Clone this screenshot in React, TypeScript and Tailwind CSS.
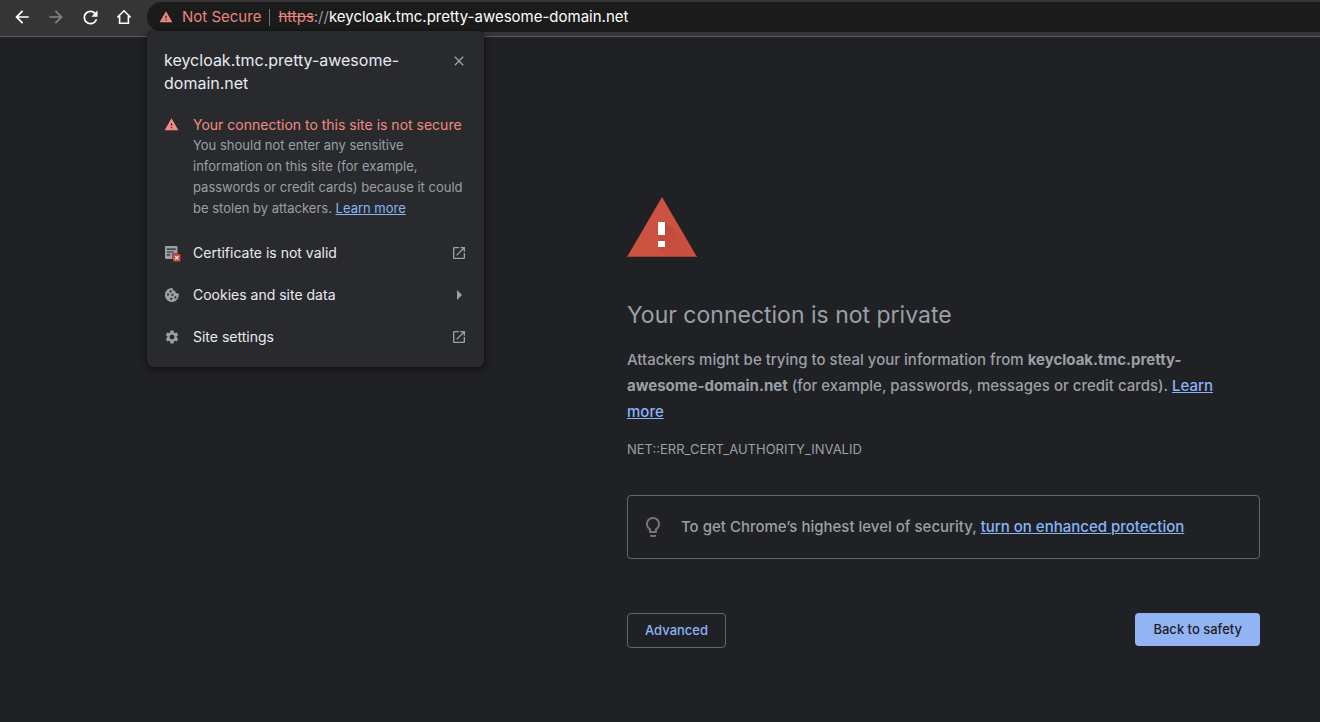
import type { ReactNode } from "react";
import {
  MdArrowBack,
  MdArrowForward,
  MdArrowRight,
  MdClose,
  MdLightbulbOutline,
  MdOpenInNew,
  MdRefresh,
  MdSettings,
  MdWarning,
} from "react-icons/md";

const HOST = "keycloak.tmc.pretty-awesome-domain.net";

function HomeIcon() {
  return (
    <svg width="16" height="16" viewBox="0 0 16 16" fill="none" stroke="currentColor" strokeWidth="1.6" aria-hidden="true">
      <path d="M1.4 8.4 8 1.8l6.600 6.600M3.600 7v7.200h8.800V7" />
    </svg>
  );
}

function CertificateIcon() {
  return (
    <svg width="17" height="17" viewBox="0 0 17 17" aria-hidden="true">
      <path fill="#9aa0a6" d="M2 1h10.500a1 1 0 0 1 1 1v6.500H8.500V14H2a1 1 0 0 1-1-1V2a1 1 0 0 1 1-1Z" />
      <path stroke="#292a2d" strokeWidth="1.200" d="M2.800 4.200h9M2.800 7h7M2.800 9.800h3.400" />
      <rect x="9" y="9" width="7.500" height="7.500" rx="1" fill="#d04a3c" />
      <path stroke="#fff" strokeWidth="1.200" d="m11.200 11.200 3.200 3.200m0-3.200-3.200 3.200" />
    </svg>
  );
}

function CookieIcon() {
  return (
    <svg width="16" height="16" viewBox="0 0 16 16" aria-hidden="true">
      <path fill="#9aa0a6" d="M8.600 1a2.600 2.600 0 0 0 2.600 3 2.400 2.400 0 0 0 2.200 2.600c.5 0 .9 0 1.300-.2A7 7 0 1 1 8.600 1Z" />
      <g fill="#292a2d">
        <circle cx="6.600" cy="4.400" r="1.100" />
        <circle cx="4" cy="7.600" r="1.100" />
        <circle cx="8.400" cy="7.800" r="1.100" />
        <circle cx="7.200" cy="11.800" r="1.100" />
        <circle cx="11.400" cy="10.400" r="1.100" />
      </g>
    </svg>
  );
}

function WarningTriangle() {
  return (
    <svg width="70" height="60" viewBox="0 0 70 60" aria-hidden="true">
      <defs>
        <linearGradient id="shade" x1="0" y1="0" x2="1" y2="1">
          <stop offset="0" stopColor="#9c3b30" stopOpacity="0.6" />
          <stop offset="0.5" stopColor="#b5453a" stopOpacity="0.2" />
          <stop offset="1" stopColor="#b5453a" stopOpacity="0" />
        </linearGradient>
      </defs>
      <path fill="#cb5140" d="M35 0 70 60H0Z" />
      <path fill="url(#shade)" d="M38 25 60 43 70 60H42L31 50 35 50 31 38Z" />
      <path fill="#a9402f" d="M.6 59h68.800l.6 1H0Z" />
      <path fill="#fff" d="M31 25h7v13h-7zM31 44h7v6h-7z" />
    </svg>
  );
}

function PopupRow({ icon, label, trailing }: { icon: ReactNode; label: string; trailing: ReactNode }) {
  return (
    <li>
      <button type="button" className="flex h-[42px] w-full items-center px-[17px] text-left text-sm text-[#e8eaed]">
        <span className="flex w-[29px] shrink-0 items-center">{icon}</span>
        <span className="flex-1">{label}</span>
        <span className="flex w-4 justify-center text-[#9aa0a6]">{trailing}</span>
      </button>
    </li>
  );
}

function SiteInfoPopup() {
  return (
    <section
      aria-label="Site information"
      className="absolute top-[31px] left-[147px] z-10 w-[337px] rounded-md bg-[#292a2d] pb-[9px] shadow-[0_2px_8px_rgba(0,0,0,0.5),0_0_1px_#000]"
    >
      <header className="flex items-start justify-between px-[17px] pt-[18px]">
        <h2 className="w-60 text-base leading-[23px] text-[#e8eaed]">{HOST}</h2>
        <button type="button" aria-label="Close" className="mt-1 text-[#9aa0a6]">
          <MdClose size={16} />
        </button>
      </header>
      <div className="flex px-[17px] pt-[19px] pb-[13px]">
        <span className="w-[29px] shrink-0 pt-[3px] text-[#f28b82]">
          <MdWarning size={15} />
        </span>
        <div className="flex-1">
          <h3 className="text-sm leading-[21px] whitespace-nowrap text-[#f28b82]">Your connection to this site is not secure</h3>
          <p className="text-[13px] leading-[21px] text-[#9aa0a6]">
            You should not enter any sensitive information on this site (for example, passwords or credit cards) because it could be
            stolen by attackers.{" "}
            <a href="#learn-more" className="text-[#8ab4f8] underline">
              Learn more
            </a>
          </p>
        </div>
      </div>
      <ul>
        <PopupRow icon={<CertificateIcon />} label="Certificate is not valid" trailing={<MdOpenInNew size={16} />} />
        <PopupRow icon={<CookieIcon />} label="Cookies and site data" trailing={<MdArrowRight size={24} className="shrink-0" />} />
        <PopupRow icon={<MdSettings size={16} className="text-[#9aa0a6]" />} label="Site settings" trailing={<MdOpenInNew size={16} />} />
      </ul>
    </section>
  );
}

function Toolbar() {
  return (
    <header className="flex h-[37px] items-start border-b border-[#5c5c5c] bg-[#353535] pt-0.5 text-white">
      <nav aria-label="Browser controls" className="flex h-[30px] w-[147px] shrink-0 items-center gap-3.5 pl-3">
        <button type="button" aria-label="Back" className="flex w-5 justify-center"><MdArrowBack size={20} /></button>
        <button type="button" aria-label="Forward" className="flex w-5 justify-center text-[#858585]"><MdArrowForward size={20} /></button>
        <button type="button" aria-label="Reload" className="flex w-5 justify-center"><MdRefresh size={21} className="shrink-0" /></button>
        <button type="button" aria-label="Home" className="flex w-5 justify-center"><HomeIcon /></button>
      </nav>
      <div className="flex h-[30px] flex-1 items-center rounded-l-full bg-[#1b1b1b] pl-3 text-[15px] whitespace-nowrap">
        <button type="button" className="flex items-center gap-[9px] text-[#e8877e]">
          <MdWarning size={14} />
          Not Secure
        </button>
        <span className="mx-2 h-[17px] w-px bg-[#757575]" />
        <span>
          <span className="text-[#e8877e] line-through">https</span>
          <span className="text-[#9a9a9a]">://</span>
          {HOST}
        </span>
      </div>
    </header>
  );
}

export default function App() {
  return (
    <div className="relative min-h-screen bg-[#202124] font-['Inter',sans-serif]">
      <Toolbar />
      <SiteInfoPopup />
      <main className="mr-[60px] ml-auto max-w-[633px] pt-40 pb-[74px] text-[#9aa0a6]">
        <WarningTriangle />
        <h1 className="mt-[42px] text-[23px] leading-8">Your connection is not private</h1>
        <p className="mt-4 pr-6 text-[15px] leading-[26px] font-medium">
          Attackers might be trying to steal your information from <strong className="font-bold">{HOST}</strong> (for example,
          passwords, messages or credit cards).{" "}
          <a href="#learn-more" className="text-[#8ab4f8] underline">
            Learn more
          </a>
        </p>
        <p className="mt-3.5 text-[13px] leading-5">NET::ERR_CERT_AUTHORITY_INVALID</p>
        <div className="mt-9 flex h-16 items-center gap-4 rounded border border-[#63666a] px-[13px] text-[15px] font-medium">
          <MdLightbulbOutline size={24} className="shrink-0 text-[#757575]" />
          <p>
            To get Chrome’s highest level of security,{" "}
            <a href="#enhanced-protection" className="text-[#8ab4f8] underline">
              turn on enhanced protection
            </a>
          </p>
        </div>
        <div className="mt-[54px] flex items-start justify-between text-[13px] font-medium">
          <button type="button" className="h-[35px] rounded border border-[#63666a] px-[17px] text-[#8ab4f8]">
            Advanced
          </button>
          <button type="button" className="h-[33px] rounded bg-[#92b4f4] px-[18px] text-[#202124]">
            Back to safety
          </button>
        </div>
      </main>
    </div>
  );
}
